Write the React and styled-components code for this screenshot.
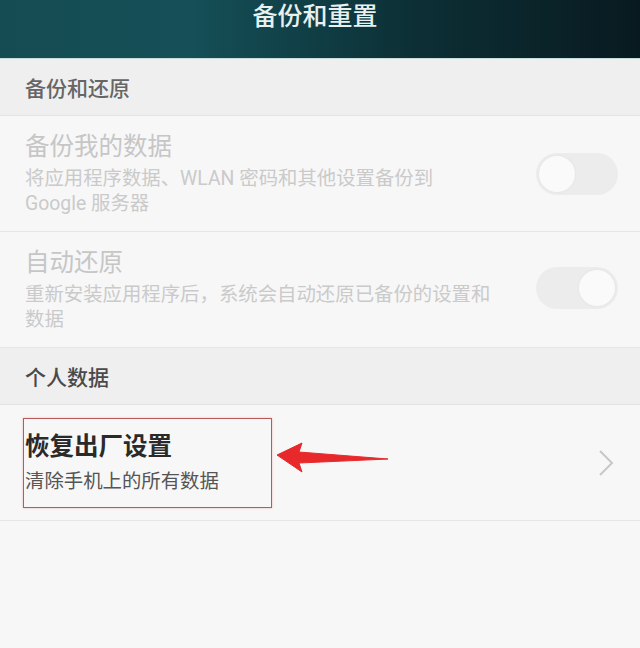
import React from "react";
import styled, { createGlobalStyle } from "styled-components";

const GlobalStyle = createGlobalStyle`
  html, body {
    margin: 0;
    padding: 0;
    background: #f7f7f7;
  }
  body {
    font-family: Roboto, "Noto Sans CJK SC", sans-serif;
  }
`;

const Screen = styled.div`
  width: 640px;
  height: 648px;
  background: #f7f7f7;
  overflow: hidden;
`;

const Header = styled.header`
  height: 58px;
  background: linear-gradient(90deg, #154c53 0%, #154f57 30%, #0c2f35 65%, #081a20 100%);
  border-bottom: 1px solid #c9dcdc;
  display: flex;
  justify-content: center;
  align-items: flex-start;
`;

const Title = styled.h1`
  margin: 0;
  font-size: 25px;
  line-height: 34px;
  font-weight: 500;
  color: #e8f0f0;
  transform: translateX(-5px);
`;

const Section = styled.div`
  height: 57px;
  box-sizing: border-box;
  background: #efefef;
  border-bottom: 1px solid #e3e3e3;
  display: flex;
  align-items: center;
  padding: 0 25px;
  font-size: 21px;
  font-weight: 500;
  color: ${(p) => (p.dark ? "#4a4a4a" : "#666")};
`;

const Row = styled.div`
  height: 116px;
  box-sizing: border-box;
  border-bottom: 1px solid #e6e6e6;
  background: #f7f7f7;
  display: flex;
  align-items: center;
  padding: 0 22px 0 25px;
  position: relative;
`;

const Text = styled.div`
  flex: 1;
  display: flex;
  flex-direction: column;
`;

const RowTitle = styled.div`
  font-size: 24.5px;
  line-height: 32px;
  font-weight: ${(p) => (p.strong ? 600 : 400)};
  color: ${(p) => (p.muted ? "#c6c6c6" : "#2a2a2a")};
  margin-bottom: ${(p) => (p.strong ? "6px" : "3px")};
`;

const RowSub = styled.div`
  font-size: 19.4px;
  line-height: 25px;
  color: ${(p) => (p.muted ? "#cacaca" : "#555")};
  max-width: 470px;
`;

const Toggle = styled.div`
  width: 82px;
  height: 42px;
  border-radius: 21px;
  background: #ececec;
  display: flex;
  align-items: center;
  justify-content: ${(p) => (p.on ? "flex-end" : "flex-start")};
  padding: 0 3px;
  box-sizing: border-box;
  margin-top: ${(p) => p.offset || "0px"};
`;

const Knob = styled.div`
  width: 36px;
  height: 36px;
  border-radius: 50%;
  background: #fafafa;
  box-shadow: 0 0 3px rgba(0, 0, 0, 0.05);
`;

const Highlight = styled.div`
  position: absolute;
  left: 23px;
  top: 13px;
  width: 249px;
  height: 90px;
  border: 1.5px solid #b85a5a;
  box-shadow: 0 0 2px rgba(230, 120, 120, 0.5);
  box-sizing: border-box;
  pointer-events: none;
`;

const Arrow = styled.svg`
  position: absolute;
  left: 274px;
  top: 35px;
`;

const Chevron = styled.svg`
  margin-right: 4px;
`;

export default function App() {
  return (
    <Screen>
      <GlobalStyle />
      <Header>
        <Title>备份和重置</Title>
      </Header>
      <Section>备份和还原</Section>
      <Row>
        <Text>
          <RowTitle muted>备份我的数据</RowTitle>
          <RowSub muted>将应用程序数据、WLAN 密码和其他设置备份到 Google 服务器</RowSub>
        </Text>
        <Toggle>
          <Knob />
        </Toggle>
      </Row>
      <Row>
        <Text>
          <RowTitle muted>自动还原</RowTitle>
          <RowSub muted>重新安装应用程序后，系统会自动还原已备份的设置和数据</RowSub>
        </Text>
        <Toggle on offset="-3px">
          <Knob />
        </Toggle>
      </Row>
      <Section dark>个人数据</Section>
      <Row>
        <Text>
          <RowTitle strong>恢复出厂设置</RowTitle>
          <RowSub>清除手机上的所有数据</RowSub>
        </Text>
        <Chevron width="16" height="28" viewBox="0 0 16 28">
          <path d="M2 2 L14 14 L2 26" fill="none" stroke="#c8c8c8" strokeWidth="2" />
        </Chevron>
        <Highlight />
        <Arrow width="116" height="34" viewBox="0 0 116 34">
          <path
            d="M3 15 L28 3 L25 12 L114 19 L25 23 L28 32 Z"
            fill="#e8292b"
            stroke="#e8292b"
            strokeWidth="1"
            strokeLinejoin="round"
          />
        </Arrow>
      </Row>
    </Screen>
  );
}
